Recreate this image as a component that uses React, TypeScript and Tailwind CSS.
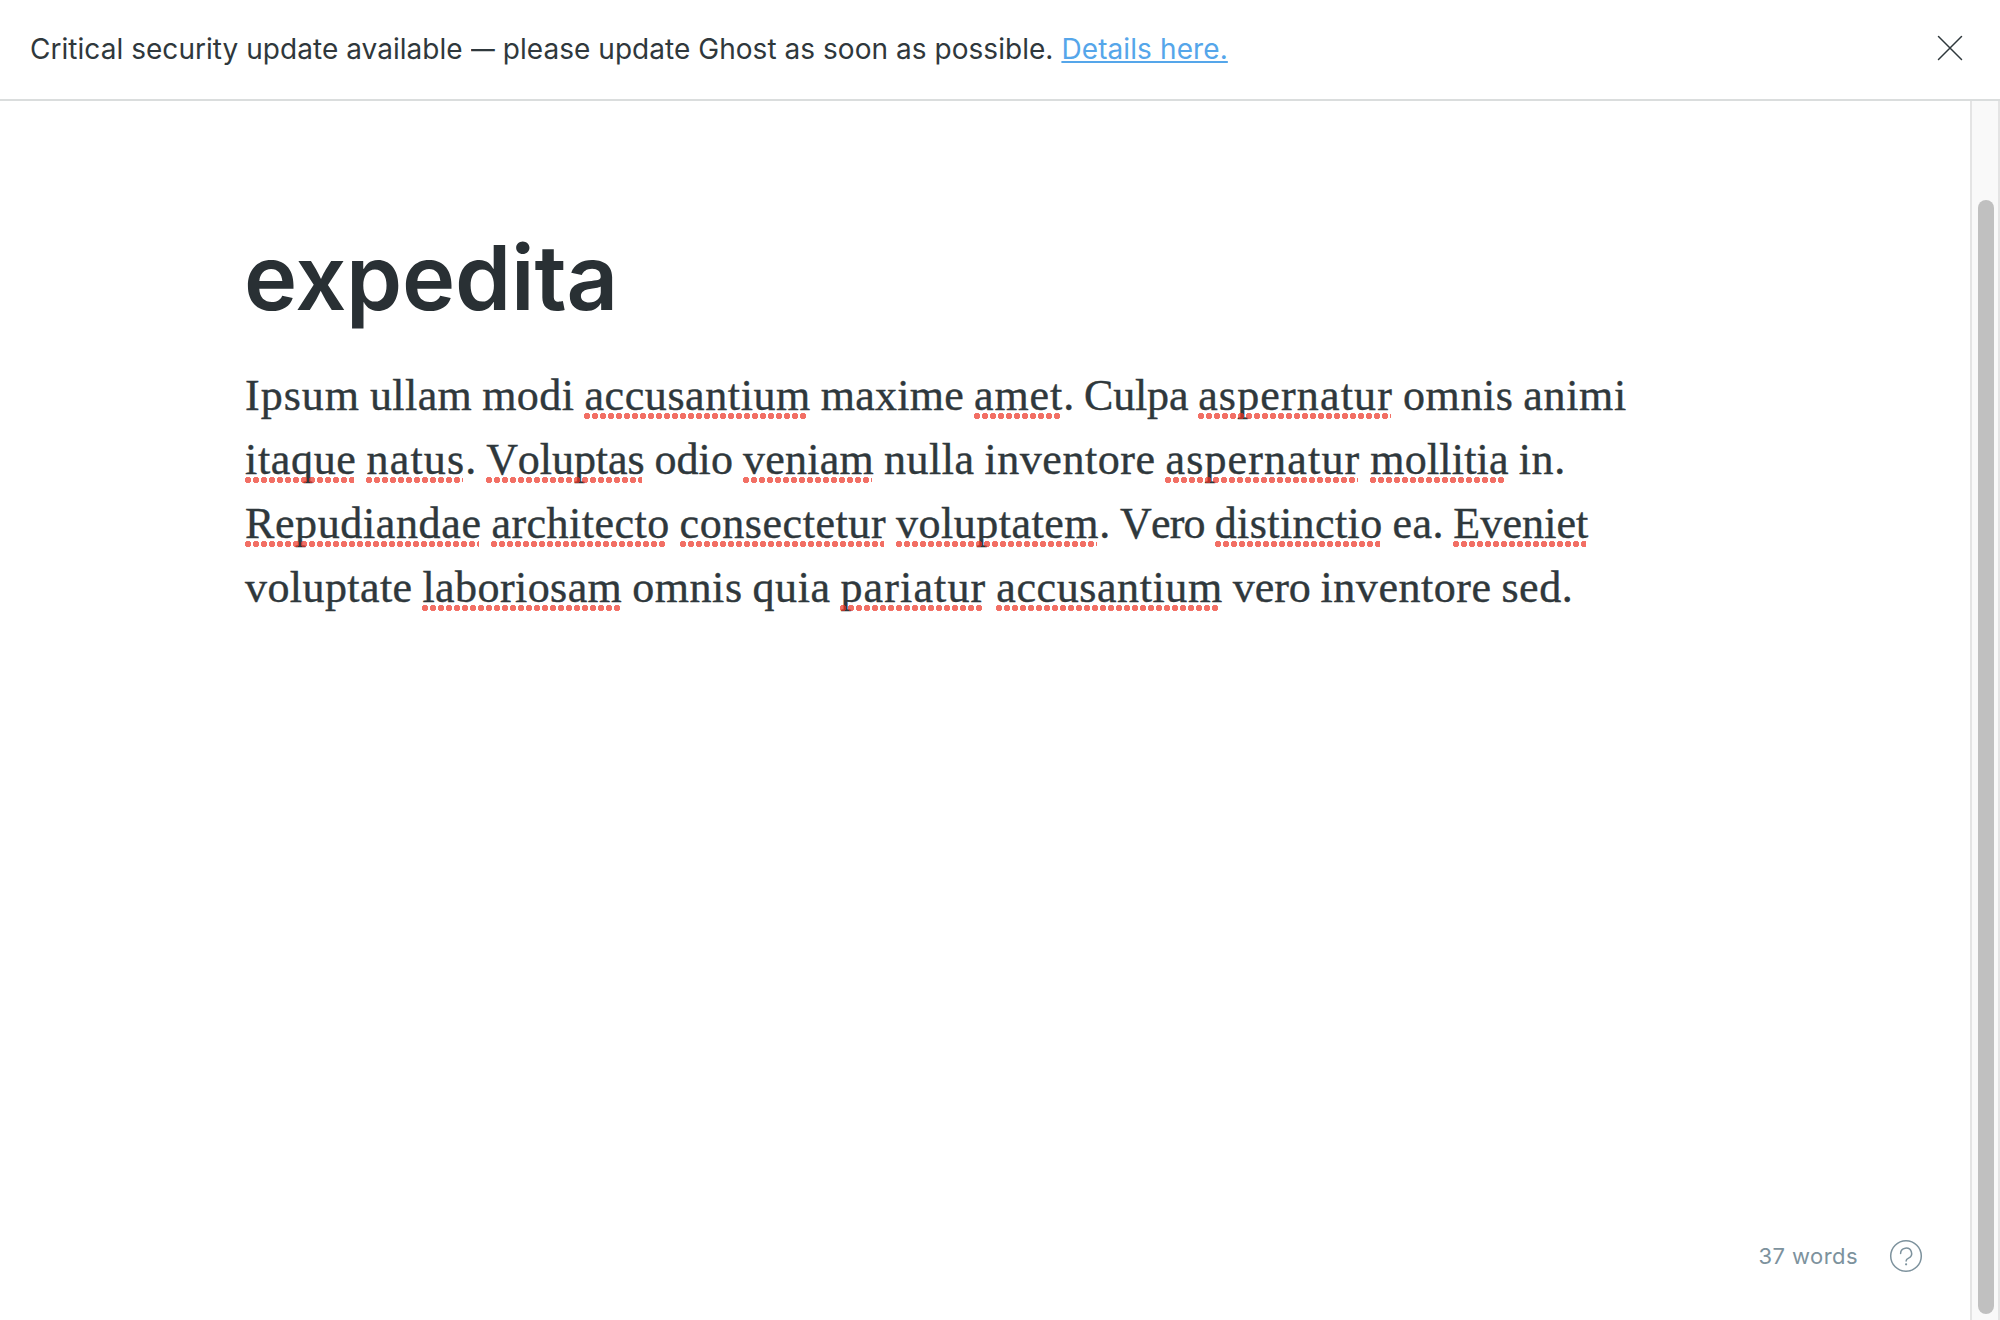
import React from 'react';

/* Target glyph advances, in em, for the body face. */
const BODY: Record<string, number> = {
  a: 0.504, b: 0.56, c: 0.454, d: 0.575, e: 0.484, h: 0.582, i: 0.293, l: 0.287, m: 0.88,
  n: 0.591, o: 0.539, p: 0.571, q: 0.56, r: 0.41, s: 0.432, t: 0.346, u: 0.576, v: 0.497,
  x: 0.504, '.': 0.27, I: 0.39, C: 0.642, V: 0.667, R: 0.702, E: 0.653,
};

/* Natural advances of Liberation Serif, in em. */
const SERIF: Record<string, number> = {
  a: 0.444, b: 0.5, c: 0.444, d: 0.5, e: 0.444, h: 0.5, i: 0.278, l: 0.278, m: 0.778,
  n: 0.5, o: 0.5, p: 0.5, q: 0.5, r: 0.333, s: 0.389, t: 0.278, u: 0.5, v: 0.5,
  x: 0.5, '.': 0.25, I: 0.333, C: 0.667, V: 0.722, R: 0.667, E: 0.611,
};

const BODY_SIZE = 40.38;
const SERIF_SIZE = 44;

const measure = (text: string, table: Record<string, number>, size: number) =>
  [...text].reduce((sum, ch) => sum + table[ch] * size, 0);

/* Underscores mark words flagged by the spell checker. */
const LINES = [
  'Ipsum ullam modi _accusantium maxime _amet. Culpa _aspernatur omnis animi',
  '_itaque _natus. _Voluptas odio _veniam nulla inventore _aspernatur _mollitia in.',
  '_Repudiandae _architecto _consectetur _voluptatem. Vero _distinctio ea. _Eveniet',
  'voluptate _laboriosam omnis quia _pariatur _accusantium vero inventore sed.',
];

function Word({ text, flagged }: { text: string; flagged?: boolean }) {
  const width = measure(text, BODY, BODY_SIZE);
  const tracking = (width - measure(text, SERIF, SERIF_SIZE)) / text.length;
  return (
    <span
      className={
        flagged
          ? "relative inline-block after:absolute after:left-0 after:right-[2.500px] after:top-[49px] after:h-[6px] after:bg-[radial-gradient(circle_at_3px_3px,rgba(236,50,35,0.7)_2.9px,transparent_3.4px)] after:bg-[length:8px_6px] after:bg-repeat-x after:content-['']"
          : 'inline-block'
      }
      style={{ width, letterSpacing: tracking }}
    >
      {text}
    </span>
  );
}

function Line({ text }: { text: string }) {
  return (
    <span className="block h-16 whitespace-nowrap">
      {text.split(' ').map((token, i) => {
        const flagged = token.startsWith('_');
        const stop = token.endsWith('.');
        const word = token.replace(/[_.]/g, '');
        return (
          <React.Fragment key={i}>
            {i > 0 && ' '}
            <Word text={word} flagged={flagged} />
            {stop && <Word text="." />}
          </React.Fragment>
        );
      })}
    </span>
  );
}

export default function App() {
  return (
    <div className="flex h-[1320px] w-[2000px] flex-col overflow-hidden bg-white font-['Inter',sans-serif]">
      <header className="flex h-[101px] shrink-0 items-center justify-between border-b-2 border-[#dadddd] pl-[30px] pr-[37px]">
        <p className="-mt-[2px] text-[28px] leading-[40px] tracking-[0.04px] text-[#2f383c]">
          Critical security update available <span className="-mx-[1.9px] inline-block scale-x-[0.85]">—</span> please
          update Ghost as soon as possible.{' '}
          <a
            href="#"
            className="tracking-[0.1px] text-[#55a6ea] underline decoration-2 underline-offset-[2px] [text-decoration-skip-ink:none]"
          >
            Details here.
          </a>
        </p>
        <button aria-label="Close" className="-mt-[3px]">
          <svg width="26" height="26" viewBox="0 0 26 26" fill="none" stroke="#2f383c" strokeWidth="1.5" strokeLinecap="round">
            <path d="M1.5 1.5l23 23M24.5 1.5l-23 23" />
          </svg>
        </button>
      </header>

      <div className="flex min-h-0 flex-1">
        <main className="flex flex-1 flex-col justify-between pl-[245px]">
          <article className="pt-[122px]">
            <h1 className="-ml-px h-[110px] text-[90px] font-semibold leading-[110px] tracking-[-0.2px] text-[#293034]">expedita</h1>
            <p className="mt-[31px] font-['Liberation_Serif',serif] text-[44px] leading-[64px] text-[#2f383c] [-webkit-text-stroke:0.4px_#2f383c] [font-kerning:none] [word-spacing:-1.1px]">
              {LINES.map((line) => (
                <Line key={line} text={line} />
              ))}
            </p>
          </article>
          <footer className="flex items-center justify-end gap-[31px] pb-[47px] pr-[47px] text-[#7d929d]">
            <span className="text-[22px] leading-[32px] tracking-[0.45px]">37 words</span>
            <svg width="34" height="34" viewBox="0 0 34 34" fill="none" stroke="currentColor" strokeWidth="1.5">
              <circle cx="17" cy="17" r="15.3" />
              <path d="M11.6 14.4a5.5 5.3 0 1 1 8 4.7c-1.7.8-2.5 1.4-2.5 3" strokeLinecap="round" />
              <circle cx="17.1" cy="25.3" r="1.1" fill="currentColor" stroke="none" />
            </svg>
          </footer>
        </main>
        <div className="w-[30px] border-x-2 border-[#e4e4e4] bg-[#f9f9f9] px-[6px] pb-[6px] pt-[99px]">
          <div className="h-full w-4 rounded-full bg-[#c0c0c0]" />
        </div>
      </div>
    </div>
  );
}
